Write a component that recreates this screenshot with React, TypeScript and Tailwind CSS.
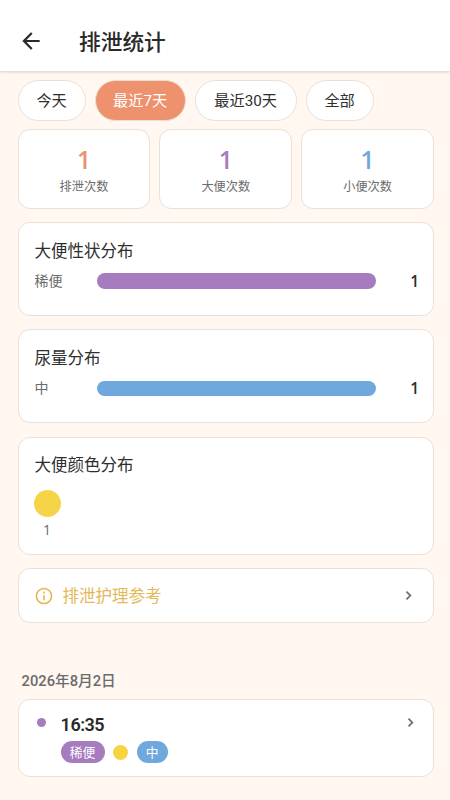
import type { ReactNode } from 'react';

type StatProps = { value: number; label: string; color: string };
type BarCardProps = { title: string; label: string; value: number; percent: number; color: string };

const ranges = ['今天', '最近7天', '最近30天', '全部'];
const rangeWidths = ['w-[68px]', 'w-[91px]', 'w-[102px]', 'w-[68px]'];
const activeRange = 1;

const stats: StatProps[] = [
  { value: 1, label: '排泄次数', color: 'text-[#e8946f]' },
  { value: 1, label: '大便次数', color: 'text-[#a67bbf]' },
  { value: 1, label: '小便次数', color: 'text-[#6fa8dc]' },
];

function Card({ className, children }: { className: string; children: ReactNode }) {
  return <section className={`rounded-[12px] border border-[#e9e1d8] bg-white ${className}`}>{children}</section>;
}

function CardTitle({ children }: { children: ReactNode }) {
  return <h2 className="text-[16.5px] leading-6 text-[#2e2e2e]">{children}</h2>;
}

function Stat({ value, label, color }: StatProps) {
  return (
    <Card className="flex h-[80px] flex-col items-center pt-4">
      <span className={`font-['Open_Sans',sans-serif] text-[24.5px] leading-[28px] font-semibold ${color}`}>{value}</span>
      <span className="mt-1 text-[12.2px] leading-[18px] text-[#6b6b6b]">{label}</span>
    </Card>
  );
}

function BarCard({ title, label, value, percent, color }: BarCardProps) {
  return (
    <Card className="h-[94px] pt-[17px] pr-[14px] pl-4">
      <CardTitle>{title}</CardTitle>
      <div className="mt-[6px] flex h-[22px] items-center">
        <span className="w-[62.5px] text-[14px] leading-5 text-[#6b6b6b]">{label}</span>
        <div className="h-[15.5px] w-[279px]">
          <div className={`h-full rounded-full ${color}`} style={{ width: `${percent}%` }} />
        </div>
        <span className="flex-1 text-right font-['Open_Sans',sans-serif] text-[15.5px] leading-5 font-semibold text-[#2e2e2e]">
          {value}
        </span>
      </div>
    </Card>
  );
}

function BackIcon() {
  return (
    <svg className="size-[26px]" viewBox="0 0 24 24" fill="currentColor">
      <path d="M20 11H7.83l5.59-5.59L12 4l-8 8 8 8 1.41-1.41L7.83 13H20v-2z" />
    </svg>
  );
}

function InfoIcon() {
  return (
    <svg className="size-5" viewBox="0 0 24 24" fill="currentColor">
      <path d="M11 7h2v2h-2zm0 4h2v6h-2zm1-9C6.48 2 2 6.48 2 12s4.48 10 10 10 10-4.48 10-10S17.52 2 12 2zm0 18c-4.41 0-8-3.59-8-8s3.59-8 8-8 8 3.59 8 8-3.59 8-8 8z" />
    </svg>
  );
}

function Chevron() {
  return (
    <svg className="size-[17px] text-[#6b6b6b]" viewBox="0 0 24 24" fill="currentColor" stroke="currentColor" strokeWidth="0.6">
      <path d="M10 6 8.59 7.41 13.17 12l-4.58 4.59L10 18l6-6z" />
    </svg>
  );
}

export default function App() {
  return (
    <div className="flex h-[800px] w-[450px] flex-col overflow-hidden bg-[#fff7f0] font-['Roboto','Noto_Sans_CJK_SC',sans-serif]">
      <header className="flex h-[71px] shrink-0 items-center bg-white pt-[11px] pl-[18px] text-[#2a2a2a] shadow-[0_1px_3px_rgba(80,50,30,0.2)]">
        <BackIcon />
        <h1 className="mt-[3px] ml-[35px] text-[21.7px] leading-8 font-medium">排泄统计</h1>
      </header>

      <main className="flex flex-col pt-[9px] pr-4 pl-[17.6px]">
        <nav className="flex gap-[9px]">
          {ranges.map((range, i) => (
            <button
              key={range}
              className={`h-[41px] shrink-0 rounded-full border text-[15.2px] leading-5 ${rangeWidths[i]} ${
                i === activeRange ? 'border-[#e9e1d8] bg-[#ee926e] text-white' : 'border-[#e9e1d8] bg-white text-[#2e2e2e]'
              }`}
            >
              {range}
            </button>
          ))}
        </nav>

        <div className="mt-2 grid grid-cols-3 gap-[9px]">
          {stats.map((stat) => (
            <Stat key={stat.label} {...stat} />
          ))}
        </div>

        <div className="mt-[13px] flex flex-col gap-[13.3px]">
          <BarCard title="大便性状分布" label="稀便" value={1} percent={100} color="bg-[#a67bbf]" />
          <BarCard title="尿量分布" label="中" value={1} percent={100} color="bg-[#6fa8dc]" />

          <Card className="h-[118.5px] pt-4 pr-4 pl-4">
            <CardTitle>大便颜色分布</CardTitle>
            <div className="-ml-px mt-3 flex w-[27px] flex-col items-center">
              <span className="size-[27px] rounded-full bg-[#f5d547]" />
              <span className="mt-[5px] font-['Open_Sans',sans-serif] text-[14px] leading-4 text-[#6b6b6b]">1</span>
            </div>
          </Card>

          <Card className="flex h-[55px] items-center pr-4 pl-[15px] text-[#e3b858]">
            <InfoIcon />
            <span className="mt-[3px] ml-[9px] flex-1 text-[16.5px] leading-6">排泄护理参考</span>
            <Chevron />
          </Card>
        </div>

        <h3 className="mt-[47px] pl-[4px] text-[14.7px] leading-[22px] font-medium text-[#6b6b6b]">2026年8月2日</h3>

        <Card className="mt-[7px] flex h-[78px] items-start pr-[14px] pl-[18px]">
          <span className="mt-[18px] size-[9px] rounded-full bg-[#a67bbf]" />
          <div className="ml-[15px] flex-1 pt-[13px]">
            <div className="text-[18px] leading-[24px] font-semibold tracking-[-0.5px] text-[#2a2a2a]">16:35</div>
            <div className="mt-[4px] flex h-[22px] items-center gap-[8.5px]">
              <span className="flex h-[22px] w-[44px] items-center justify-center rounded-full bg-[#a67bbf] text-[12.8px] text-white">稀便</span>
              <span className="size-[15px] rounded-full bg-[#f7d53f]" />
              <span className="flex h-[22px] w-[31px] items-center justify-center rounded-full bg-[#6fa8dc] text-[12.8px] text-white">中</span>
            </div>
          </div>
          <div className="pt-[14px]">
            <Chevron />
          </div>
        </Card>
      </main>
    </div>
  );
}
